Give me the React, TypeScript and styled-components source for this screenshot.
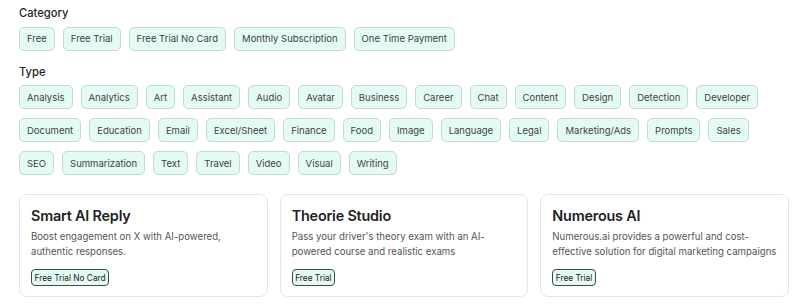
import React from "react";
import styled, { createGlobalStyle } from "styled-components";

const Global = createGlobalStyle`
  html, body { margin: 0; padding: 0; background: #ffffff; }
  body { font-family: Inter, "Noto Sans", sans-serif; color: #1f2937; }
`;

const Page = styled.div`
  width: 770px;
  padding: 5px 11px 0 19px;
  display: flex;
  flex-direction: column;
`;

const Label = styled.div`
  font-size: 11.2px;
  font-weight: 500;
  color: #262626;
  line-height: 16px;
  margin-bottom: 5.5px;
`;

const ChipRow = styled.div`
  display: flex;
  flex-wrap: wrap;
  gap: 9px 8px;
  margin-bottom: 13px;
`;

const Chip = styled.span`
  display: inline-flex;
  align-items: center;
  height: 24px;
  box-sizing: border-box;
  padding: 0 7px;
  border: 1px solid #c8d8d2;
  border-radius: 5px;
  background: #e4fbf3;
  font-size: 9.5px;
  color: #3d4247;
`;

const Cards = styled.div`
  display: grid;
  grid-template-columns: repeat(3, 1fr);
  gap: 12px;
  margin-top: 6px;
`;

const Card = styled.div`
  border: 1px solid #e6e6e6;
  border-radius: 8px;
  padding: 11px 8px 10px 11px;
  height: 103px;
  box-sizing: border-box;
  display: flex;
  flex-direction: column;
  align-items: flex-start;
`;

const Title = styled.div`
  font-size: 14.4px;
  font-weight: 600;
  letter-spacing: -0.2px;
  color: #222;
  line-height: 20px;
  margin-bottom: 3px;
`;

const Desc = styled.div`
  font-size: 9.65px;
  color: #555;
  line-height: 15px;
  min-height: 30px;
  margin-bottom: 10px;
`;

const Badge = styled.span`
  display: inline-flex;
  align-items: center;
  height: 17px;
  box-sizing: border-box;
  padding: 0 2.5px;
  border: 1.5px solid #3f4a46;
  border-radius: 4px;
  background: #e4fbf3;
  font-size: 8.3px;
  color: #222;
`;

const categories = ["Free", "Free Trial", "Free Trial No Card", "Monthly Subscription", "One Time Payment"];
const types = [
  "Analysis", "Analytics", "Art", "Assistant", "Audio", "Avatar", "Business", "Career", "Chat", "Content",
  "Design", "Detection", "Developer", "Document", "Education", "Email", "Excel/Sheet", "Finance", "Food",
  "Image", "Language", "Legal", "Marketing/Ads", "Prompts", "Sales", "SEO", "Summarization", "Text",
  "Travel", "Video", "Visual", "Writing",
];
const tools = [
  { title: "Smart AI Reply", desc: "Boost engagement on X with AI-powered, authentic responses.", badge: "Free Trial No Card" },
  { title: "Theorie Studio", desc: "Pass your driver's theory exam with an AI-powered course and realistic exams", badge: "Free Trial" },
  { title: "Numerous AI", desc: "Numerous.ai provides a powerful and cost-effective solution for digital marketing campaigns", badge: "Free Trial" },
];

export default function App() {
  return (
    <>
      <Global />
      <Page>
        <Label>Category</Label>
        <ChipRow>
          {categories.map((c) => <Chip key={c}>{c}</Chip>)}
        </ChipRow>
        <Label>Type</Label>
        <ChipRow>
          {types.map((c) => <Chip key={c}>{c}</Chip>)}
        </ChipRow>
        <Cards>
          {tools.map((t) => (
            <Card key={t.title}>
              <Title>{t.title}</Title>
              <Desc>{t.desc}</Desc>
              <Badge>{t.badge}</Badge>
            </Card>
          ))}
        </Cards>
      </Page>
    </>
  );
}
